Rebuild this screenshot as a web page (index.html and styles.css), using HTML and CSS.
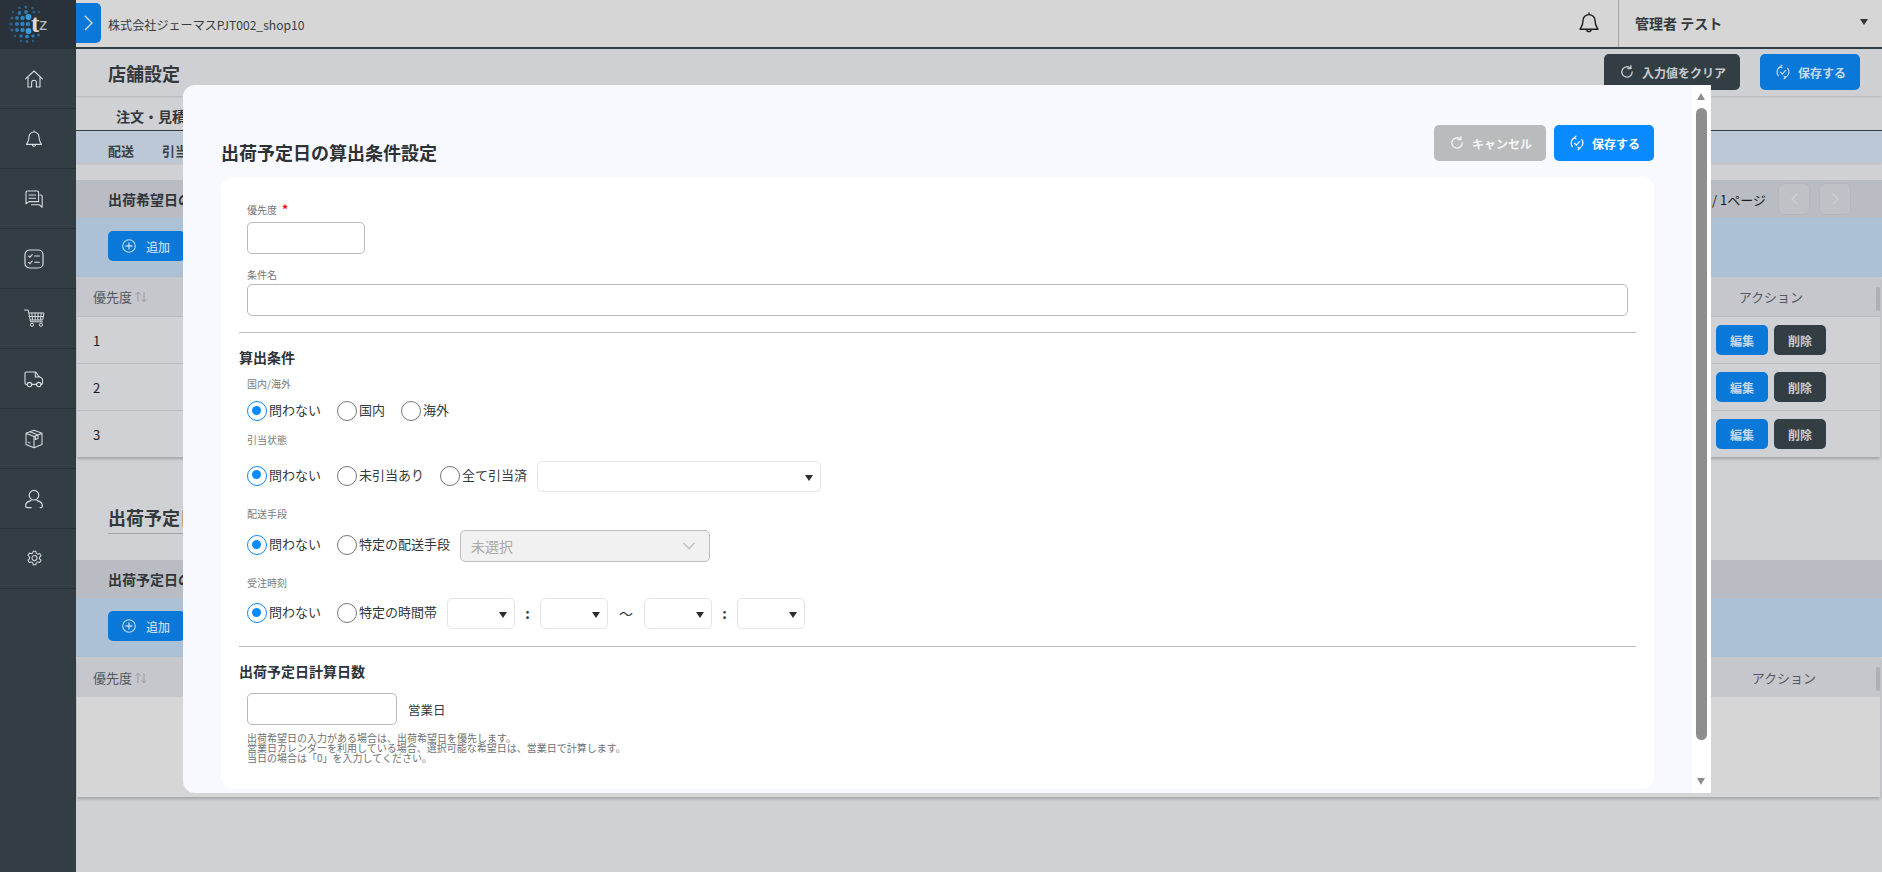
FILE: index.html
```html
<!DOCTYPE html>
<html lang="ja">
<head>
<meta charset="utf-8">
<title>店舗設定</title>
<link rel="stylesheet" href="styles.css">
</head>
<body>
<svg class="defs" width="0" height="0" aria-hidden="true">
  <symbol id="i-reset" viewBox="0 0 16 16"><path d="M13.2 8a5.2 5.2 0 1 1-1.6-3.8" fill="none" stroke="currentColor" stroke-width="1.3" stroke-linecap="round"/><path d="M11.9 1.6v3h-3" fill="none" stroke="currentColor" stroke-width="1.3" stroke-linecap="round" stroke-linejoin="round"/></symbol>
  <symbol id="i-save" viewBox="0 0 16 16"><path d="M3.3 11.6A5.8 5.8 0 0 1 6 2.6M12.7 4.4A5.8 5.8 0 0 1 10 13.4" fill="none" stroke="currentColor" stroke-width="1.2" stroke-linecap="round"/><path d="M5.4 8.2l1.9 1.9 3.4-3.7" fill="none" stroke="currentColor" stroke-width="1.2" stroke-linecap="round" stroke-linejoin="round"/><path d="M7 1.2L5.2 2.6 7 3.9M9 12.1l1.8 1.4L9 14.8" fill="none" stroke="currentColor" stroke-width="1.1" stroke-linecap="round" stroke-linejoin="round"/></symbol>
  <symbol id="i-plus" viewBox="0 0 16 16"><circle cx="8" cy="8" r="6.3" fill="none" stroke="currentColor" stroke-width="1.1"/><path d="M8 5v6M5 8h6" stroke="currentColor" stroke-width="1.3" stroke-linecap="round"/></symbol>
  <symbol id="i-sort" viewBox="0 0 14 12"><path d="M4 11V1.2M1.4 3.8L4 1.2l2.6 2.6M10 1v9.8M7.4 8.2l2.6 2.6 2.6-2.6" fill="none" stroke="currentColor" stroke-width="1"/></symbol>
</svg>

<div class="app">
  <nav class="sidebar">
    <div class="logo">
      <svg width="76" height="49" viewBox="0 0 76 49">
        <g fill="#2b84c2">
          <circle cx="19.5" cy="8" r="1.3" opacity=".55"/><circle cx="26" cy="7" r="1.5" opacity=".7"/><circle cx="32.5" cy="8" r="1.3" opacity=".6"/>
          <circle cx="13" cy="12" r="1.2" opacity=".5"/><circle cx="19.5" cy="13" r="1.9" opacity=".85"/><circle cx="26" cy="12" r="1.9" opacity=".9"/><circle cx="34" cy="12" r="1.5" opacity=".6"/><circle cx="39" cy="12" r="1.2" opacity=".5"/>
          <circle cx="12" cy="18" r="1.5" opacity=".6"/><circle cx="17" cy="18" r="2" opacity=".8"/><circle cx="22.5" cy="18" r="2.2"/><circle cx="28.5" cy="17" r="2.9" fill="#3b9fdc"/>
          <circle cx="11" cy="24" r="1.6" opacity=".6"/><circle cx="17" cy="24" r="2.1" opacity=".85"/><circle cx="22.5" cy="24" r="2.2"/><circle cx="28" cy="24" r="2.2"/>
          <circle cx="12" cy="30" r="1.5" opacity=".6"/><circle cx="17" cy="30" r="2" opacity=".85"/><circle cx="22.5" cy="30" r="2.2"/><circle cx="28.5" cy="31" r="2.9" fill="#3b9fdc"/>
          <circle cx="15" cy="36" r="1.3" opacity=".55"/><circle cx="21" cy="36" r="1.8" opacity=".85"/><circle cx="27" cy="36.5" r="1.9"/><circle cx="33" cy="36" r="1.8" opacity=".9"/><circle cx="38.5" cy="35" r="1.5" opacity=".7"/>
          <circle cx="21" cy="41" r="1.2" opacity=".55"/><circle cx="27" cy="41.5" r="1.4" opacity=".7"/><circle cx="33" cy="41" r="1.2" opacity=".55"/>
        </g>
        <text x="31" y="32" class="logo-t">t</text><text x="39" y="30" class="logo-z">z</text>
      </svg>
    </div>
    <a class="nav-item"><svg width="20" height="20" viewBox="0 0 20 20"><path d="M1.6 9.8L10 2l8.4 7.8M4 8v10h3.6v-4.4a2.4 2.4 0 0 1 4.8 0V18H16V8" fill="none" stroke="currentColor" stroke-width="1.1" stroke-linejoin="round" stroke-linecap="round"/></svg></a>
    <a class="nav-item"><svg width="20" height="20" viewBox="0 0 20 20"><path d="M10 3a5 5 0 0 0-5 5c0 4.6-2 6-2.4 7.4h14.8C17 14 15 12.600 15 8a5 5 0 0 0-5-5zM8.300 15.600a1.700 1.700 0 0 0 3.400 0M10 1.400V3" fill="none" stroke="currentColor" stroke-width="1.1" stroke-linejoin="round"/></svg></a>
    <a class="nav-item"><svg width="20" height="20" viewBox="0 0 20 20"><path d="M14.6 12.600H5l-3 2.200V3.400A1.400 1.400 0 0 1 3.400 2h9.800a1.400 1.400 0 0 1 1.400 1.400zM5 6h6.500M5 9.200h6.500M16 6h1a1.200 1.200 0 0 1 1.200 1.200v11l-3-2.400H7.500" fill="none" stroke="currentColor" stroke-width="1.100" stroke-linejoin="round" stroke-linecap="round"/></svg></a>
    <a class="nav-item"><svg width="20" height="20" viewBox="0 0 20 20"><rect x="1" y="1" width="18" height="18" rx="4.500" fill="none" stroke="currentColor" stroke-width="1.200"/><path d="M4.600 7l1.300 1.300 2.300-2.600M4.600 13.300l1.300 1.300 2.300-2.600M10.600 7h4.800M10.600 13.200h4.800" fill="none" stroke="currentColor" stroke-width="1.100" stroke-linecap="round"/></svg></a>
    <a class="nav-item"><svg width="21" height="20" viewBox="0 0 21 20"><path d="M.6 1h3.600l2.400 11.800h12M5 4h15l-1.400 7H6.200M7.800 4l.8 7M11 4l.3 7M14 4l-.1 7M17.200 4l-.7 7M5 7.500h14.200" fill="none" stroke="currentColor" stroke-width="1" stroke-linejoin="round" stroke-linecap="round"/><circle cx="8" cy="15.800" r="1.600" fill="none" stroke="currentColor"/><circle cx="17" cy="15.800" r="1.600" fill="none" stroke="currentColor"/></svg></a>
    <a class="nav-item"><svg width="20" height="20" viewBox="0 0 20 20"><path d="M3.200 15.400H2.400A1.400 1.400 0 0 1 1 14V4.400A1.400 1.400 0 0 1 2.400 3h8.800a1.400 1.400 0 0 1 1.200.7l2 3.300 3.600 2.400a1 1 0 0 1 .5.9v3.700a1.400 1.400 0 0 1-1.400 1.400h-.4M7.800 15.400h4.700M11.300 3.600V8h3.900" fill="none" stroke="currentColor" stroke-width="1.100" stroke-linejoin="round" stroke-linecap="round"/><circle cx="5.500" cy="15.600" r="2.200" fill="none" stroke="currentColor" stroke-width="1.100"/><circle cx="14.800" cy="15.600" r="2.200" fill="none" stroke="currentColor" stroke-width="1.100"/></svg></a>
    <a class="nav-item"><svg width="20" height="20" viewBox="0 0 20 20"><path d="M10 1.200l8 3v11.200l-8 3.400-8-3.400V4.200zM2 4.200l8 3.400 8-3.400M10 7.600v11.200M6 2.800l8 3.200v3.600l-2.600 1V7" fill="none" stroke="currentColor" stroke-width="1.050" stroke-linejoin="round"/><path d="M4 13.200l2 .8" stroke="currentColor" stroke-linecap="round"/></svg></a>
    <a class="nav-item"><svg width="20" height="20" viewBox="0 0 20 20"><circle cx="10" cy="6.200" r="4.800" fill="none" stroke="currentColor" stroke-width="1.200"/><path d="M7 11.600c-3.200.6-5.400 2.800-5.400 5.400 0 1 .8 1.600 1.600 1.600h4M13 11.600c3.200.6 5.400 2.800 5.400 5.400 0 1-.8 1.600-1.600 1.600h-.6" fill="none" stroke="currentColor" stroke-width="1.200" stroke-linecap="round"/></svg></a>
    <a class="nav-item"><svg width="17" height="17" viewBox="0 0 20 20"><path d="M8.400 1.100h3.200l.5 2.400 1.700.9 2.300-.8 1.600 2.800-1.800 1.600v1.900l1.800 1.600-1.600 2.800-2.300-.8-1.700.9-.5 2.500H8.400l-.5-2.500-1.700-.9-2.300.8-1.600-2.800 1.800-1.600V7.500L2.300 5.900l1.600-2.800 2.300.8 1.700-.9z" fill="none" stroke="currentColor" stroke-width="1.200" stroke-linejoin="round" transform="translate(0 .5)"/><circle cx="10" cy="9.500" r="3" fill="none" stroke="currentColor" stroke-width="1.200"/></svg></a>
  </nav>

  <div class="main">
    <header class="topbar">
      <button class="toggle" type="button"><svg width="9" height="16" viewBox="0 0 9 16"><path d="M1 1l7 7-7 7" fill="none" stroke="#e8f2fb" stroke-width="1.200"/></svg></button>
      <span class="shop">株式会社ジェーマスPJT002_shop10</span>
      <span class="bell"><svg width="20" height="22" viewBox="0 0 20 22"><path d="M10 2.600a6 6 0 0 0-6 6c0 5.200-2.200 7-3 8.600h18c-.8-1.600-3-3.400-3-8.600a6 6 0 0 0-6-6zM7.800 17.400a2.200 2.200 0 0 0 4.400 0M10 .6v2" fill="none" stroke="#1c1c1c" stroke-width="1.400" stroke-linejoin="round"/></svg></span>
      <div class="user"><span>管理者 テスト</span><i class="caret"></i></div>
    </header>

    <div class="titlebar">
      <h1>店舗設定</h1>
      <div class="title-actions">
        <button class="btn btn-dark" type="button"><svg class="ic"><use href="#i-reset"/></svg>入力値をクリア</button>
        <button class="btn btn-blue" type="button"><svg class="ic"><use href="#i-save"/></svg>保存する</button>
      </div>
    </div>
    <div class="tabs"><span>注文・見積</span></div>
    <div class="subtabs"><span>配送</span><span>引当</span></div>

    <section class="section first">
      <div class="sec-head">
        <b>出荷希望日の算出条件</b>
        <div class="pager">
          <span>1 / 1ページ</span>
          <span class="pg"><svg width="9" height="14" viewBox="0 0 9 14"><path d="M7.500 1.500L2 7l5.500 5.500" fill="none" stroke="#d0d1d5" stroke-width="1.200"/></svg></span>
          <span class="pg"><svg width="9" height="14" viewBox="0 0 9 14"><path d="M1.500 1.500L7 7l-5.500 5.500" fill="none" stroke="#d0d1d5" stroke-width="1.200"/></svg></span>
        </div>
      </div>
      <div class="band"><button class="btn btn-blue btn-add" type="button"><svg class="ic"><use href="#i-plus"/></svg>追加</button></div>
      <div class="table">
        <div class="thead"><span class="th-name">優先度<svg class="sort"><use href="#i-sort"/></svg></span><span class="th-act">アクション</span><i class="mini"></i></div>
        <div class="row"><span>1</span><div class="acts"><button class="mb mb-blue" type="button">編集</button><button class="mb mb-dark" type="button">削除</button></div></div>
        <div class="row"><span>2</span><div class="acts"><button class="mb mb-blue" type="button">編集</button><button class="mb mb-dark" type="button">削除</button></div></div>
        <div class="row"><span>3</span><div class="acts"><button class="mb mb-blue" type="button">編集</button><button class="mb mb-dark" type="button">削除</button></div></div>
      </div>
    </section>

    <h2 class="sec-title">出荷予定日の算出条件</h2>

    <section class="section">
      <div class="sec-head"><b>出荷予定日の算出条件</b></div>
      <div class="band"><button class="btn btn-blue btn-add" type="button"><svg class="ic"><use href="#i-plus"/></svg>追加</button></div>
      <div class="table table-empty">
        <div class="thead"><span class="th-name">優先度<svg class="sort"><use href="#i-sort"/></svg></span><span class="th-act th-act2">アクション</span><i class="mini"></i></div>
        <div class="empty"></div>
      </div>
    </section>
  </div>

  <div class="modal">
    <div class="modal-body">
      <div class="modal-head">
        <h2>出荷予定日の算出条件設定</h2>
        <div class="modal-actions">
          <button class="btn btn-grey" type="button"><svg class="ic"><use href="#i-reset"/></svg>キャンセル</button>
          <button class="btn btn-bright" type="button"><svg class="ic"><use href="#i-save"/></svg>保存する</button>
        </div>
      </div>
      <div class="card">
        <div class="field">
          <label class="lab">優先度<em>*</em></label>
          <input class="inp inp-s" type="text">
        </div>
        <div class="field field2">
          <label class="lab">条件名</label>
          <input class="inp inp-w" type="text">
        </div>
        <hr class="rule">
        <h3>算出条件</h3>

        <div class="group g1">
          <div class="sublab">国内/海外</div>
          <div class="radios r1">
            <label class="radio on w1">問わない</label>
            <label class="radio w2">国内</label>
            <label class="radio">海外</label>
          </div>
        </div>
        <div class="group g2">
          <div class="sublab">引当状態</div>
          <div class="radios r2">
            <label class="radio on w1">問わない</label>
            <label class="radio w3">未引当あり</label>
            <label class="radio w4">全て引当済</label>
            <div class="sel sel-l"></div>
          </div>
        </div>
        <div class="group g3">
          <div class="sublab">配送手段</div>
          <div class="radios r3">
            <label class="radio on w1">問わない</label>
            <label class="radio w5">特定の配送手段</label>
            <div class="dis"><span>未選択</span><svg width="14" height="8" viewBox="0 0 14 8"><path d="M1.500 1l5.500 5.500L12.500 1" fill="none" stroke="#c4c4c4" stroke-width="1.600"/></svg></div>
          </div>
        </div>
        <div class="group g4">
          <div class="sublab">受注時刻</div>
          <div class="radios r4">
            <label class="radio on w1">問わない</label>
            <label class="radio w6">特定の時間帯</label>
            <div class="sel sel-t"></div><span class="sep">:</span><div class="sel sel-t"></div><span class="tilde">〜</span><div class="sel sel-t"></div><span class="sep">:</span><div class="sel sel-t"></div>
          </div>
        </div>
        <hr class="rule rule2">
        <h3>出荷予定日計算日数</h3>
        <div class="days"><input class="inp inp-m" type="text"><span>営業日</span></div>
        <p class="note">出荷希望日の入力がある場合は、出荷希望日を優先します。<br>営業日カレンダーを利用している場合、選択可能な希望日は、営業日で計算します。<br>当日の場合は「0」を入力してください。</p>
      </div>
    </div>
    <div class="scroll">
      <i class="arrow up"></i>
      <i class="thumb"></i>
      <i class="arrow down"></i>
    </div>
  </div>
</div>
</body>
</html>
```
FILE: styles.css
```css
* { box-sizing: border-box; }
html, body { margin: 0; padding: 0; height: 100%; overflow: hidden; }
body { font-family: "Noto Sans CJK JP", "Noto Sans", sans-serif; color: #2d3236; background: #d0d1d5; font-size: 13px; }
.defs { position: absolute; }
button { font-family: inherit; border: 0; padding: 0; }
h1, h2, h3, p { margin: 0; }

.app { position: relative; display: flex; width: 1882px; height: 872px; overflow: hidden; }

/* sidebar */
.sidebar { width: 76px; flex: none; background: #323d44; color: #d9dcde; }
.logo { height: 49px; background: #29323a; }
.logo svg { display: block; }
.logo-t { font: 700 25px "Liberation Serif", serif; fill: #d9dbdc; }
.logo-z { font: 400 17px "Liberation Sans", sans-serif; fill: #b9bcbe; }
.nav-item { display: flex; align-items: center; justify-content: center; height: 60px; border-bottom: 1px solid #2a3339; padding-right: 8px; }

/* main */
.main { flex: 1; min-width: 0; background: #d0d1d5; }
.topbar { height: 49px; background: #d6d6d6; border-bottom: 2px solid #333d44; display: flex; align-items: flex-start; }
.toggle { width: 25px; height: 40px; margin-top: 3px; background: #0a78d9; border-radius: 0 5px 5px 0; display: flex; align-items: center; justify-content: center; }
.shop { margin: 15px 0 0 7px; font-size: 12.1px; line-height: 19px; color: #3a3d40; }
.bell { margin: 12px 0 0 auto; height: 22px; display: block; }
.user { width: 264px; height: 47px; margin-left: 19px; border-left: 1px solid #a5a6a8; padding: 0 14px 0 16px; display: flex; align-items: center; justify-content: space-between; font-weight: 700; font-size: 14px; color: #34393d; }
.user span { margin-bottom: 1px; }
.caret { display: block; width: 0; height: 0; border-left: 4.5px solid transparent; border-right: 4.5px solid transparent; border-top: 6px solid #333; margin-bottom: 3px; }

.titlebar { height: 47px; padding: 5px 22px 0 32px; background: #cfd0d4; display: flex; justify-content: space-between; align-items: flex-start; box-shadow: 0 1px 2px rgba(0,0,0,.12); position: relative; }
.titlebar h1 { font-size: 18px; line-height: 26px; margin-top: 6px; font-weight: 700; color: #34393d; }
.title-actions { display: flex; gap: 20px; }

.btn { height: 36px; border-radius: 5px; display: inline-flex; align-items: center; font-weight: 700; font-size: 12px; padding-left: 15px; color: #cfd3d6; }
.ic { width: 16px; height: 16px; margin-right: 7px; flex: none; }
.btn-dark { width: 136px; background: #333d44; color: #c9cccf; }
.btn-blue { width: 100px; background: #0a78d9; color: #c6d9ea; }
.btn-grey { width: 112px; background: #b9bbbc; color: #f4f5f5; }
.btn-bright { width: 100px; background: #0a8aff; color: #fff; }
.btn-add { width: 77px; height: 30px; padding-left: 13px; font-weight: 500; }
.btn-add .ic { margin-right: 9px; }

.tabs { height: 35px; border-bottom: 1px solid #333d44; padding: 10px 0 0 40px; font-weight: 700; font-size: 14px; line-height: 20px; color: #34393d; }
.subtabs { height: 32px; background: #bcc8d6; display: flex; gap: 28px; padding: 4px 0 0 32px; font-weight: 700; font-size: 13px; line-height: 31px; color: #3a4046; box-shadow: 0 1px 2px rgba(0,0,0,.1); }

.section.first { margin-top: 17px; }
.sec-head { height: 38px; background: #babcc3; padding: 0 31px 0 32px; display: flex; align-items: center; justify-content: space-between; font-size: 14px; color: #30353a; }
.sec-head b { margin-bottom: 1px; }
.pager { display: flex; align-items: center; gap: 9px; font-size: 13px; color: #1c1e20; }
.pager span:first-child { margin-right: 3px; }
.pg { width: 32px; height: 32px; border: 1px solid #b5b7bd; border-radius: 6px; background: #bfc1c7; display: flex; align-items: center; justify-content: center; }
.band { height: 59px; background: #adc1d6; padding: 13px 0 0 32px; }
.table { margin: 0 2px 0 1px; box-shadow: 0 2px 3px rgba(0,0,0,.22); background: #d0d1d5; }
.thead { position: relative; height: 40px; background: #c6c7cc; display: flex; align-items: center; justify-content: space-between; padding: 0 77px 0 16px; border-bottom: 1px solid #bcbdc2; font-size: 13px; color: #54585c; }
.th-act2 { margin-right: -13px; }
.sort { width: 14px; height: 12px; margin-left: 2px; color: #9a9da1; vertical-align: -1px; }
.mini { position: absolute; right: 0; top: 10px; width: 4px; height: 24px; border-radius: 2px; background: #aeb0b5; }
.row { height: 47px; display: flex; align-items: center; justify-content: space-between; padding: 0 54px 0 16px; border-bottom: 1px solid #bcbdc2; font-size: 13px; color: #1c1c1c; }
.row:last-child { height: 46px; border-bottom: 0; }
.acts { display: flex; gap: 6px; }
.mb { width: 52px; height: 30px; border-radius: 5px; font-size: 12px; font-weight: 700; }
.mb-blue { background: #0a78d9; color: #c6d9ea; }
.mb-dark { background: #333d44; color: #c9cccf; }

.sec-title { display: table; margin: 52px 0 26px 32px; padding-bottom: 7px; border-bottom: 1px solid #a3a4a8; font-size: 18px; line-height: 17px; font-weight: 700; color: #34393d; }
.table-empty { background: #d6d6d6; }
.table-empty .thead { border-bottom: 0; }
.empty { height: 100px; }

/* modal */
.modal { position: absolute; left: 183px; top: 85px; width: 1528px; height: 708px; display: flex; background: #f8f9fe; border-radius: 12px 0 0 12px; overflow: hidden; }
.modal-body { flex: 1; min-width: 0; padding: 40px 38px 0 38px; }
.modal-head { display: flex; justify-content: space-between; height: 52px; }
.modal-head h2 { font-size: 18px; line-height: 26px; margin: 14px 0 0 0; font-weight: 700; color: #2d3236; }
.modal-actions { display: flex; gap: 8px; }
.card { background: #fff; border-radius: 12px; height: 612px; padding: 26px 18px 0 18px; }

.field { padding-left: 8px; }
.lab { display: block; height: 12px; font-size: 10px; line-height: 12px; color: #70757a; }
.lab em { color: #f00; font-style: normal; font-weight: 700; margin-left: 5px; font-size: 12px; }
.inp { display: block; height: 32px; border: 1px solid #b9b9b9; border-radius: 5px; background: #fff; padding: 0 8px; outline: 0; }
.field .inp { margin-top: 7px; }
.inp-s { width: 118px; }
.inp-w { width: 1381px; }
.inp-m { width: 150px; }
.field2 { margin-top: 15px; }
.field2 .inp { margin-top: 3px; }
.rule { border: 0; border-top: 1px solid #bdbdbd; margin: 16px 0 0 0; height: 0; width: 1397px; }
.rule2 { margin-top: 17px; }
.card h3 { font-size: 14px; line-height: 20px; font-weight: 700; color: #2d3236; margin-top: 14px; }

.group { padding-left: 8px; }
.sublab { font-size: 10px; line-height: 12px; color: #777b80; }
.g1 { margin-top: 11px; }
.g2 { margin-top: 15px; }
.g3 { margin-top: 16px; }
.g4 { margin-top: 15px; }
.radios { display: flex; align-items: center; font-size: 13px; color: #34393d; }
.r1 { margin-top: 11px; height: 18px; }
.r2 { margin-top: 15px; height: 31px; }
.r3 { margin-top: 10px; height: 32px; }
.r4 { margin-top: 9px; height: 31px; }
.radio { position: relative; padding-left: 22px; line-height: 18px; white-space: nowrap; width: 64px; flex: none; }
.radio::before { content: ""; position: absolute; left: 0; top: 0; width: 18px; height: 18px; border: 1px solid #777; border-radius: 50%; background: #fff; }
.radio.on::before { border-color: #0a8aff; }
.radio.on::after { content: ""; position: absolute; left: 4.500px; top: 4.500px; width: 9px; height: 9px; border-radius: 50%; background: #0a8aff; }
.w1 { width: 90px; }
.w2 { width: 64px; }
.w3 { width: 103px; }
.w4 { width: 97px; }
.w5 { width: 123px; }
.w6 { width: 110px; }
.r2 .radio, .r3 .radio { margin-bottom: 4px; }
.r4 .radio { margin-bottom: 3px; }
.sel { position: relative; height: 31px; border: 1px solid #e4e4e4; border-radius: 5px; background: #fff; flex: none; }
.sel::after { content: ""; position: absolute; right: 7px; top: 13px; width: 0; height: 0; border-left: 4px solid transparent; border-right: 4px solid transparent; border-top: 6px solid #2d2d2d; }
.sel-l { width: 284px; }
.sel-t { width: 68px; }
.sep { width: 25px; text-align: center; font-weight: 700; font-size: 14px; line-height: 31px; }
.tilde { width: 36px; text-align: center; font-size: 14px; line-height: 28px; margin-bottom: 2px; }
.dis { width: 250px; height: 32px; border: 1px solid #bdbdbd; border-radius: 5px; background: #f1f1f1; display: flex; align-items: center; justify-content: space-between; padding: 0 13px 0 10px; color: #a9a9a9; font-size: 14px; }
.days { display: flex; align-items: center; gap: 11px; margin: 12px 0 0 8px; font-size: 12.5px; color: #34393d; }
.note { margin: 8px 0 0 8px; font-size: 10px; line-height: 10px; color: #6d7175; }

.scroll { width: 19px; background: #fff; flex: none; position: relative; }
.thumb { position: absolute; left: 4px; top: 23px; width: 11px; height: 632px; border-radius: 6px; background: #8e8e8e; }
.arrow { position: absolute; left: 5px; width: 0; height: 0; border-left: 4.5px solid transparent; border-right: 4.5px solid transparent; }
.up { top: 8px; border-bottom: 7px solid #8e8e8e; }
.down { top: 693px; border-top: 7px solid #8e8e8e; }
```
